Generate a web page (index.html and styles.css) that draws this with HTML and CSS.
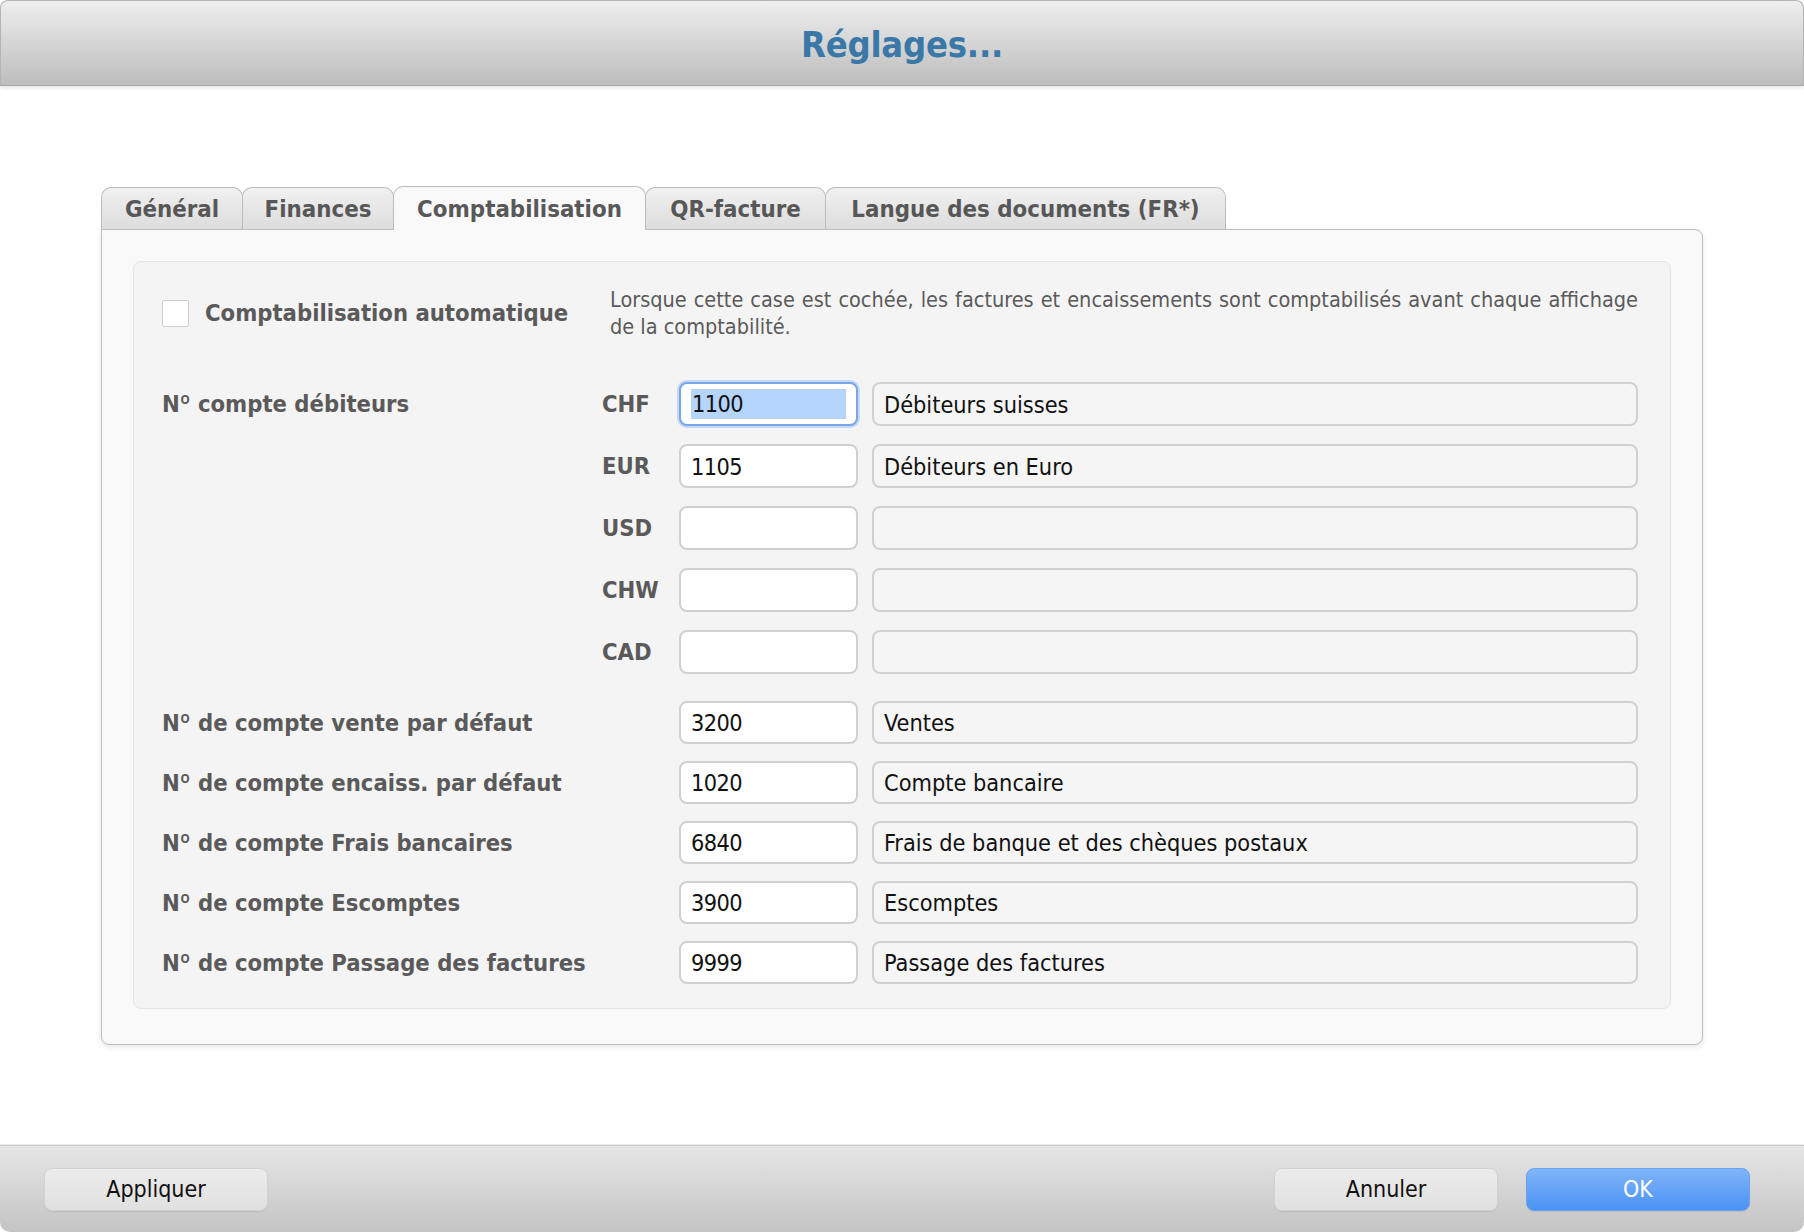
FILE: index.html
```html
<!DOCTYPE html>
<html lang="fr">
<head>
<meta charset="utf-8">
<title>Réglages...</title>
<link rel="stylesheet" href="styles.css">
</head>
<body>
<div class="window">
  <header class="titlebar"><h1 class="title">Réglages...</h1></header>
  <main class="content">
    <nav class="tabs">
      <div class="tab t-gen">Général</div>
      <div class="tab t-fin">Finances</div>
      <div class="tab t-compta active">Comptabilisation</div>
      <div class="tab t-qr">QR-facture</div>
      <div class="tab t-lang">Langue des documents (FR*)</div>
    </nav>
    <section class="panel">
      <div class="inner">
        <div class="auto-row">
          <div class="auto-left">
            <span class="checkbox"></span>
            <span class="label">Comptabilisation automatique</span>
          </div>
          <p class="auto-desc">Lorsque cette case est cochée, les factures et encaissements sont comptabilisés avant chaque affichage de la comptabilité.</p>
        </div>

        <div class="group group1">
          <div class="row">
            <span class="label">N<span class="ord">º</span> compte débiteurs</span>
            <span class="cur">CHF</span>
            <div class="field acct focused"><span class="sel">1100</span></div>
            <div class="field desc">Débiteurs suisses</div>
          </div>
          <div class="row">
            <span class="label"></span>
            <span class="cur">EUR</span>
            <div class="field acct">1105</div>
            <div class="field desc">Débiteurs en Euro</div>
          </div>
          <div class="row">
            <span class="label"></span>
            <span class="cur">USD</span>
            <div class="field acct"></div>
            <div class="field desc"></div>
          </div>
          <div class="row">
            <span class="label"></span>
            <span class="cur">CHW</span>
            <div class="field acct"></div>
            <div class="field desc"></div>
          </div>
          <div class="row">
            <span class="label"></span>
            <span class="cur">CAD</span>
            <div class="field acct"></div>
            <div class="field desc"></div>
          </div>
        </div>

        <div class="group group2">
          <div class="row">
            <span class="label wide">N<span class="ord">º</span> de compte vente par défaut</span>
            <div class="field acct">3200</div>
            <div class="field desc">Ventes</div>
          </div>
          <div class="row">
            <span class="label wide">N<span class="ord">º</span> de compte encaiss. par défaut</span>
            <div class="field acct">1020</div>
            <div class="field desc">Compte bancaire</div>
          </div>
          <div class="row">
            <span class="label wide">N<span class="ord">º</span> de compte Frais bancaires</span>
            <div class="field acct">6840</div>
            <div class="field desc">Frais de banque et des chèques postaux</div>
          </div>
          <div class="row">
            <span class="label wide">N<span class="ord">º</span> de compte Escomptes</span>
            <div class="field acct">3900</div>
            <div class="field desc">Escomptes</div>
          </div>
          <div class="row">
            <span class="label wide">N<span class="ord">º</span> de compte Passage des factures</span>
            <div class="field acct">9999</div>
            <div class="field desc">Passage des factures</div>
          </div>
        </div>
      </div>
    </section>
  </main>
  <footer class="footer">
    <button class="btn">Appliquer</button>
    <div class="spacer"></div>
    <button class="btn">Annuler</button>
    <button class="btn primary">OK</button>
  </footer>
</div>
</body>
</html>
```

FILE: styles.css
```css
* { box-sizing: border-box; }

html, body {
  margin: 0;
  padding: 0;
  background: #ffffff;
}

body {
  font-family: "DejaVu Sans Condensed", "DejaVu Sans", sans-serif;
  color: #111;
}

.window {
  width: 1804px;
  height: 1232px;
  display: flex;
  flex-direction: column;
  background: #ffffff;
}

/* ---------- title bar ---------- */
.titlebar {
  height: 86px;
  flex: none;
  display: flex;
  align-items: center;
  justify-content: center;
  background: linear-gradient(#eeeeee, #bdbdbd);
  border: 1px solid #b4b4b4;
  border-bottom-color: #a6a6a6;
  border-radius: 8px 8px 0 0;
  box-shadow: 0 2px 4px rgba(0, 0, 0, 0.10);
  position: relative;
  z-index: 1;
}

.title {
  margin: 2px 0 0 0;
  font-size: 36px;
  font-weight: 700;
  color: #3a78a8;
  letter-spacing: -0.2px;
}

/* ---------- content ---------- */
.content {
  flex: 1;
  padding: 100px 101px 0 101px;
}

.tabs {
  display: flex;
  height: 43px;
  align-items: flex-end;
}

.tab {
  height: 42px;
  display: flex;
  align-items: center;
  justify-content: center;
  padding-top: 1px;
  font-size: 23.8px;
  font-weight: 700;
  color: #575757;
  background: linear-gradient(#f1f1f1, #dcdcdc);
  border: 1px solid #bcbcbc;
  border-bottom: none;
  border-radius: 10px 10px 0 0;
  margin-right: -1px;
}

.t-gen { width: 142px; }
.t-fin { width: 152px; }
.t-compta { width: 253px; }
.t-qr { width: 181px; }
.t-lang { width: 401px; }

.tab.active {
  background: #f9f9f9;
  color: #585858;
  position: relative;
  z-index: 2;
  margin-bottom: -1px;
  height: 44px;
}

.panel {
  height: 816px;
  background: #f9f9f9;
  border: 1px solid #bdbdbd;
  border-radius: 0 8px 8px 8px;
  box-shadow: 0 2px 6px rgba(0, 0, 0, 0.10);
  padding: 31px 31px 35px 31px;
}

.inner {
  height: 748px;
  background: #f4f4f4;
  border: 1px solid #e3e3e3;
  border-radius: 8px;
  padding: 24px 32px 0 28px;
}

/* ---------- auto row ---------- */
.auto-row {
  display: flex;
  align-items: center;
  height: 54px;
}

.auto-left {
  width: 448px;
  flex: none;
  display: flex;
  align-items: center;
}

.checkbox {
  width: 27px;
  height: 27px;
  background: #ffffff;
  border: 1px solid #cfcfcf;
  border-radius: 2px;
  margin-right: 16px;
  flex: none;
}

.label {
  font-size: 23.6px;
  font-weight: 700;
  color: #5a5a5a;
  white-space: nowrap;
}

.ord {
  font-family: Roboto, "DejaVu Sans Condensed", sans-serif;
  font-weight: 700;
}

.auto-desc {
  margin: 0;
  flex: 1;
  font-size: 21.5px;
  line-height: 27px;
  color: #5a5a5a;
  text-align: justify;
}

/* ---------- rows ---------- */
.group {
  display: flex;
  flex-direction: column;
}

.group1 {
  margin-top: 42px;
  gap: 18px;
}

.group1 .row { height: 44px; }

.group2 {
  margin-top: 27px;
  gap: 17px;
}

.group2 .row { height: 43px; }

.row {
  display: grid;
  grid-template-columns: 440px 77px 179px 1fr;
  column-gap: 0;
  align-items: center;
}

.row .label.wide {
  grid-column: 1 / span 2;
}

.cur {
  font-size: 23.6px;
  font-weight: 700;
  color: #5a5a5a;
}

.field {
  height: 100%;
  display: flex;
  align-items: center;
  font-size: 23.3px;
  color: #111;
  border: 2px solid #d0d0d0;
  border-radius: 8px;
  padding: 0 10px;
  white-space: nowrap;
}

.acct {
  background: #ffffff;
  letter-spacing: -0.6px;
}

.desc {
  background: #f5f5f5;
  margin-left: 14px;
}

.acct.focused {
  border: 2px solid #7aa5e6;
  box-shadow: 0 0 0 2px #c3d8f6;
}

.sel {
  display: block;
  background: #b6d5fd;
  width: 100%;
  line-height: 30px;
  padding-left: 1px;
}

/* ---------- footer ---------- */
.footer {
  height: 87px;
  flex: none;
  display: flex;
  align-items: center;
  padding: 0 54px 0 44px;
  gap: 28px;
  background: linear-gradient(#e6e6e6, #c4c4c4);
  border-top: 1px solid #c9c9c9;
  border-radius: 0 0 10px 10px;
  box-shadow: 0 -1px 0 #ececec;
}

.spacer { flex: 1; }

.btn {
  width: 224px;
  height: 43px;
  font-family: "DejaVu Sans Condensed", "DejaVu Sans", sans-serif;
  font-size: 23px;
  color: #111;
  background: linear-gradient(#ececec, #e0e0e0);
  border: 1px solid #d2d2d2;
  border-radius: 8px;
  padding: 0;
  box-shadow: 0 1px 1px rgba(0, 0, 0, 0.08);
}

.btn.primary {
  color: #ffffff;
  background: linear-gradient(#80b5f9, #4a92f3);
  border-color: #6aa3ee;
}
```
